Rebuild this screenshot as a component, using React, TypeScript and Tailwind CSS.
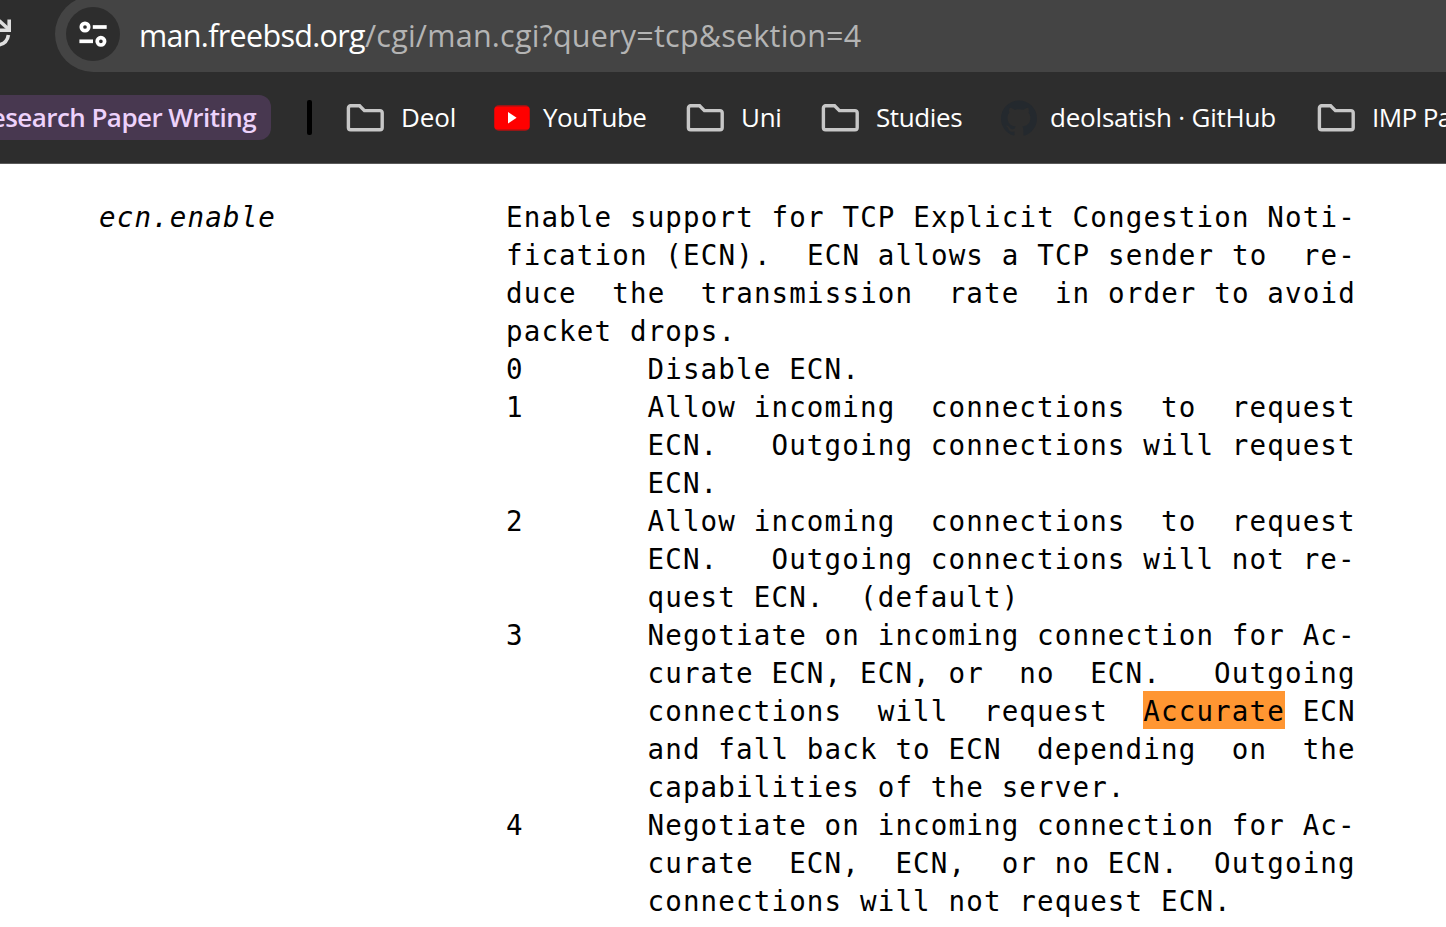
import type { ReactNode } from "react";
import { SiGithub } from "react-icons/si";

function FolderIcon() {
  return (
    <svg className="h-[28px] w-[38px] shrink-0" viewBox="0 0 38 28" fill="none">
      <path
        d="M4.6 1.8H13.6L18.4 6.6H34A2.2 2.2 0 0 1 36.2 8.8V23.6A2.2 2.2 0 0 1 34 25.8H4.6A2.2 2.2 0 0 1 2.4 23.6V4A2.2 2.2 0 0 1 4.6 1.8Z"
        stroke="#c7c7c7"
        strokeWidth="3.4"
      />
    </svg>
  );
}

function YouTubeIcon() {
  return (
    <svg className="h-[28px] w-[36px] shrink-0" viewBox="0 0 36 28">
      <rect x="0" y="1" width="36" height="26" rx="5" fill="#ff0000" fillOpacity="0.5" />
      <rect x="0.5" y="2.5" width="35" height="23" rx="3" fill="#ff0000" />
      <path d="M14 8L22.6 13.7L14 19.5Z" fill="#fff" />
    </svg>
  );
}

function ReloadIcon() {
  return (
    <svg className="h-[36px] w-[12px] shrink-0" viewBox="0 0 12 36" fill="none" stroke="#dedede" strokeWidth="3.6">
      <path d="M-1 4.5L9 13.5" />
      <path d="M9.2 3.6V14.2H-1" />
      <path d="M8.4 19C7.6 24.5 4 28.5 -3 29.3" />
    </svg>
  );
}

function SiteSettingsIcon() {
  return (
    <svg className="h-[28px] w-[30px]" viewBox="0 0 30 28" fill="none" stroke="#fff" strokeWidth="3.7">
      <circle cx="7" cy="7" r="3.7" />
      <path d="M14.8 7H28.7" />
      <path d="M1.4 21.3H15" />
      <circle cx="22.9" cy="21.3" r="3.7" />
    </svg>
  );
}

function Bookmark({ className, icon, label, text }: { className: string; icon: ReactNode; label: string; text: string }) {
  return (
    <div className={`flex shrink-0 items-center ${className}`}>
      {icon}
      <span className={`pb-[2px] whitespace-nowrap ${text}`}>{label}</span>
    </div>
  );
}

const options = [
  { value: "0", lines: ["Disable ECN."] },
  {
    value: "1",
    lines: ["Allow incoming  connections  to  request", "ECN.   Outgoing connections will request", "ECN."],
  },
  {
    value: "2",
    lines: ["Allow incoming  connections  to  request", "ECN.   Outgoing connections will not re-", "quest ECN.  (default)"],
  },
  {
    value: "3",
    lines: [
      "Negotiate on incoming connection for Ac-",
      "curate ECN, ECN, or  no  ECN.   Outgoing",
      "connections  will  request  Accurate ECN",
      "and fall back to ECN  depending  on  the",
      "capabilities of the server.",
    ],
  },
  {
    value: "4",
    lines: [
      "Negotiate on incoming connection for Ac-",
      "curate  ECN,  ECN,  or no ECN.  Outgoing",
      "connections will not request ECN.",
    ],
  },
];

const summary = [
  "Enable support for TCP Explicit Congestion Noti-",
  "fication (ECN).  ECN allows a TCP sender to  re-",
  "duce  the  transmission  rate  in order to avoid",
  "packet drops.",
];

function Line({ text }: { text: string }) {
  const [before, after] = text.split("Accurate");
  return (
    <div className="h-[38px]">
      {before}
      {after !== undefined && (
        <>
          <mark className="-mt-px inline-block h-[38px] bg-[#ff9632] pt-px align-top text-black">Accurate</mark>
          {after}
        </>
      )}
    </div>
  );
}

export default function App() {
  return (
    <div className="flex h-[927px] w-[1446px] flex-col overflow-hidden bg-white">
      <header className="flex h-[164px] shrink-0 flex-col border-b border-[#5a5a5a] bg-[#2d2d2d] font-['Open_Sans','Noto_Sans',sans-serif] text-white">
        <div className="flex h-[72px] shrink-0 items-end">
          <div className="flex h-[56px] w-[55px] shrink-0 items-start">
            <ReloadIcon />
          </div>
          <div className="flex h-[76px] shrink-0 grow items-center rounded-l-full bg-[#444] pl-[11px]">
            <div className="flex size-[54px] shrink-0 items-center justify-center rounded-full bg-[#2d2d2d]">
              <SiteSettingsIcon />
            </div>
            <span className="ml-[19px] pt-px text-[30.5px] leading-[40px] tracking-[-0.68px] whitespace-nowrap">
              man.freebsd.org
              <span className="tracking-[0.22px] text-[#b4b4b4]">/cgi/man.cgi?query=tcp&amp;sektion=4</span>
            </span>
          </div>
        </div>
        <nav className="flex h-[91px] items-center text-[26px] leading-[36px]">
          <div className="flex h-[45px] w-[271px] shrink-0 items-center justify-end overflow-hidden rounded-r-[12px] bg-[#483850] pr-[15px] pb-[2px] font-semibold tracking-[-0.55px] whitespace-nowrap text-[#edd2fb]">
            Research Paper Writing
          </div>
          <div className="ml-[36px] h-[35px] w-[5px] shrink-0 rounded-[2px] bg-black" />
          <Bookmark className="ml-[34px] w-[148px]" icon={<FolderIcon />} label="Deol" text="ml-[17px] tracking-[-0.1px]" />
          <Bookmark className="w-[192px]" icon={<YouTubeIcon />} label="YouTube" text="ml-[13px] tracking-[-0.5px]" />
          <Bookmark className="w-[135px]" icon={<FolderIcon />} label="Uni" text="ml-[17px] tracking-[-0.3px]" />
          <Bookmark className="w-[180px]" icon={<FolderIcon />} label="Studies" text="ml-[17px] tracking-[-0.4px]" />
          <Bookmark
            className="w-[316px]"
            icon={<SiGithub className="size-[36px] shrink-0 text-[#24292e]" />}
            label="deolsatish · GitHub"
            text="ml-[13px] tracking-[-0.2px]"
          />
          <Bookmark className="" icon={<FolderIcon />} label="IMP Papers" text="ml-[17px] tracking-[-0.6px]" />
        </nav>
      </header>
      <main className="flex px-[99px] pt-[34px] font-['DejaVu_Sans_Mono',monospace] text-[27.5px] leading-[38px] tracking-[1.15px] whitespace-pre text-black">
        <i className="w-[407px] shrink-0">ecn.enable</i>
        <div className="flex flex-col">
          {summary.map((line) => (
            <Line key={line} text={line} />
          ))}
          {options.map((option) => (
            <div key={option.value} className="flex">
              <div className="w-[141.5px] shrink-0">{option.value}</div>
              <div>
                {option.lines.map((line) => (
                  <Line key={line} text={line} />
                ))}
              </div>
            </div>
          ))}
        </div>
      </main>
    </div>
  );
}
